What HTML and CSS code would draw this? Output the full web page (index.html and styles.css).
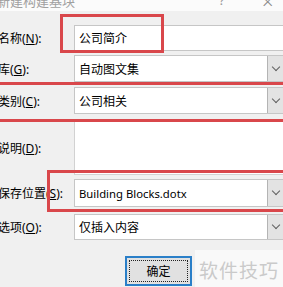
FILE: index.html
```html
<!DOCTYPE html>
<html lang="zh-CN">
<head>
  <meta charset="UTF-8">
  <meta name="viewport" content="width=device-width, initial-scale=1.0">
  <title>新建构建基块</title>
  <link rel="stylesheet" href="styles.css">
</head>
<body>
  <div class="dialog">
    <div class="titlebar">
      <span class="title">新建构建基块</span>
      <span class="help">?</span>
      <span class="close">×</span>
    </div>

    <div class="form">
      <div class="row row-name">
        <label>名称(<u>N</u>):</label>
        <div class="field">公司简介</div>
      </div>

      <div class="row row-lib">
        <label>库(<u>G</u>):</label>
        <div class="combo"><span>自动图文集</span><i class="arrow"></i></div>
      </div>

      <div class="row row-cat">
        <label>类别(<u>C</u>):</label>
        <div class="combo"><span>公司相关</span><i class="arrow"></i></div>
      </div>

      <div class="row row-desc">
        <label>说明(<u>D</u>):</label>
        <div class="field memo"></div>
      </div>

      <div class="row row-save">
        <label>保存位置(<u>S</u>):</label>
        <div class="combo"><span class="latin">Building Blocks.dotx</span><i class="arrow"></i></div>
      </div>

      <div class="row row-opt">
        <label>选项(<u>O</u>):</label>
        <div class="combo"><span>仅插入内容</span><i class="arrow"></i></div>
      </div>
    </div>

    <div class="actions">
      <button class="btn-ok"><span>确定</span></button>
      <div class="watermark">软件技巧</div>
    </div>

    <!-- annotation boxes drawn over the dialog -->
    <div class="mark mark-name"></div>
    <div class="mark mark-cat"></div>
    <div class="mark mark-save"></div>
  </div>
</body>
</html>
```

FILE: styles.css
```css
body {
  margin: 0;
  padding: 0;
  background: #f0f0f0;
  font-family: "Noto Sans", "Noto Sans CJK SC", sans-serif;
  font-size: 12px;
  color: #000;
  overflow: hidden;
}

.dialog {
  position: relative;
  width: 283px;
  height: 287px;
  overflow: hidden;
  background: #f0f0f0;
}

.titlebar {
  position: relative;
  height: 11px;
  background: #fbfbfb;
}

.title {
  position: absolute;
  left: -3px;
  top: -9px;
  font-size: 13px;
  color: #a0a0a0;
}

.help {
  position: absolute;
  left: 219px;
  top: -9px;
  font-size: 13px;
  color: #9a9a9a;
}

.close {
  position: absolute;
  left: 262px;
  top: -12px;
  font-size: 20px;
  font-weight: 300;
  color: #8a8a8a;
}

.form {
  display: flex;
  flex-direction: column;
}

.row {
  display: grid;
  grid-template-columns: 74px 1fr;
  align-items: center;
  height: 27px;
}

.row label {
  margin-left: -2px;
  white-space: nowrap;
}

.row-name { margin-top: 14px; height: 26px; }
.row-lib { margin-top: 4px; }
.row-cat { margin-top: 5px; }
.row-desc { margin-top: 7px; height: 54px; }
.row-save { margin-top: 4px; height: 28px; }
.row-opt { margin-top: 7px; height: 26px; }

.field,
.combo {
  height: 100%;
  box-sizing: border-box;
  background: #fff;
  border: 1px solid #c6c6c6;
  border-right: none;
  display: flex;
  align-items: center;
  padding-left: 4px;
}

.memo {
  border-color: #d2d2d2;
}

.combo span {
  flex: 1;
}

.combo .latin {
  font-size: 11.3px;
}

.arrow {
  width: 16px;
  height: 100%;
  box-sizing: border-box;
  background: #e3e3e3;
  border-left: 1px solid #b4b4b4;
  display: flex;
  align-items: center;
  justify-content: center;
}

.arrow::before {
  content: "";
  width: 5px;
  height: 5px;
  margin-top: -4px;
  border-right: 1px solid #606060;
  border-bottom: 1px solid #606060;
  transform: rotate(45deg);
}

.actions {
  display: flex;
  align-items: flex-start;
  margin-top: 16px;
  padding-left: 125px;
}

.btn-ok {
  width: 72px;
  height: 30px;
  padding: 2px;
  border: 2px solid #2a7fc8;
  background: #e1e1e1;
  font-family: inherit;
  font-size: 12px;
  color: #000;
}

.btn-ok span {
  display: flex;
  height: 100%;
  align-items: center;
  justify-content: center;
  border: 1px dotted #222;
  box-sizing: border-box;
}

.watermark {
  margin-left: 3px;
  margin-top: -6px;
  padding: 0 4px;
  height: 40px;
  display: flex;
  align-items: center;
  background: rgba(255, 255, 255, 0.6);
  font-size: 19px;
  color: #cacaca;
  letter-spacing: 1px;
  white-space: nowrap;
}

.mark {
  position: absolute;
  border: 3px solid #d9474b;
  box-sizing: border-box;
}

.mark-name {
  left: 60px;
  top: 14px;
  width: 104px;
  height: 39px;
}

.mark-cat {
  left: -10px;
  top: 82px;
  width: 310px;
  height: 40px;
}

.mark-save {
  left: 47px;
  top: 170px;
  width: 260px;
  height: 42px;
}
```
